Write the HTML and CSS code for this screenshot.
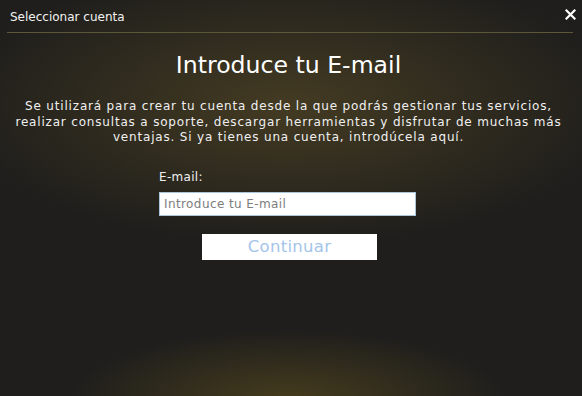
FILE: index.html
```html
<!DOCTYPE html>
<html>
<head>
<meta charset="utf-8">
<link rel="stylesheet" href="styles.css">
</head>
<body>
<div class="dialog">
  <div class="header">
    <span class="title">Seleccionar cuenta</span>
    <svg class="close" width="11" height="11" viewBox="0 0 11 11"><path d="M1.5 1.5 L9.5 9.5 M9.5 1.5 L1.5 9.5" stroke="#fff" stroke-width="2.2" stroke-linecap="square" fill="none"/></svg>
  </div>
  <div class="rule"></div>
  <div class="content">
    <h1 class="heading">Introduce tu E-mail</h1>
    <p class="desc">Se utilizará para crear tu cuenta desde la que podrás gestionar tus servicios, realizar consultas a soporte, descargar herramientas y disfrutar de muchas más ventajas. Si ya tienes una cuenta, introdúcela aquí.</p>
    <div class="form">
      <label class="label" for="email">E-mail:</label>
      <input class="input" id="email" type="text" placeholder="Introduce tu E-mail">
      <button class="btn">Continuar</button>
    </div>
  </div>
</div>
</body>
</html>
```
FILE: styles.css
```css
html, body {
  margin: 0;
  padding: 0;
  width: 582px;
  height: 396px;
  overflow: hidden;
}
body {
  font-family: "DejaVu Sans", Verdana, sans-serif;
  color: #fff;
  background-color: #1f1e1c;
  background-image:
    radial-gradient(ellipse 340px 140px at 288px 105px, rgba(92,78,38,0.6), rgba(92,78,38,0) 100%),
    radial-gradient(ellipse 220px 70px at 288px 400px, rgba(95,80,30,0.6), rgba(95,80,30,0) 100%);
}
.dialog {
  width: 582px;
  height: 396px;
  display: flex;
  flex-direction: column;
}
.header {
  display: flex;
  justify-content: space-between;
  align-items: center;
  height: 32px;
  padding: 0 6px 0 10px;
}
.title {
  font-size: 12px;
  color: #f2f2f2;
  margin-top: 1px;
}
.close {
  margin-top: -4px;
}
.rule {
  height: 1px;
  margin: 0 9px 0 7px;
  background: #5c5738;
}
.content {
  display: flex;
  flex-direction: column;
  align-items: center;
  padding-right: 5px;
}
.heading {
  margin: 17px 0 0 0;
  font-weight: normal;
  font-size: 23.6px;
  line-height: 30px;
  color: #fff;
}
.desc {
  margin: 19px 0 0 0;
  width: 562px;
  text-align: center;
  font-size: 12px;
  letter-spacing: 0.82px;
  line-height: 15.5px;
  color: #f0f0f0;
}
.form {
  display: flex;
  flex-direction: column;
  align-items: flex-start;
  width: 257px;
  margin-top: 24px;
  margin-left: -2px;
}
.label {
  font-size: 12px;
  letter-spacing: 0.3px;
  line-height: 14px;
  color: #f0f0f0;
}
.input {
  box-sizing: border-box;
  width: 257px;
  height: 24px;
  margin-top: 8px;
  border: 1px solid #a9c6dc;
  background: #fff;
  padding: 0 4px;
  font-family: "DejaVu Sans", Verdana, sans-serif;
  font-size: 12px;
  letter-spacing: 0.4px;
  outline: none;
}
.input::placeholder {
  color: #7d7d7d;
}
.btn {
  align-self: center;
  margin-top: 18px;
  margin-left: 4px;
  width: 175px;
  height: 26px;
  border: none;
  background: #fff;
  color: #a4c4ea;
  font-family: "DejaVu Sans", Verdana, sans-serif;
  font-size: 16.5px;
  letter-spacing: 0.3px;
  padding: 0;
}
```
